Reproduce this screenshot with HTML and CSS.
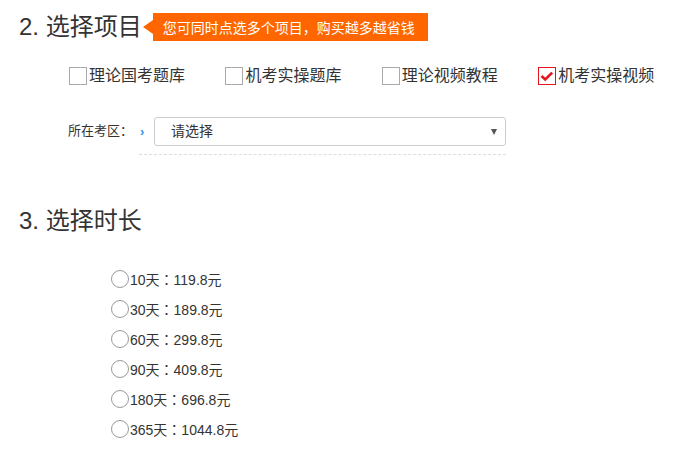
FILE: index.html
```html
<!DOCTYPE html>
<html lang="zh-CN">
<head>
<meta charset="utf-8">
<title>选择项目</title>
<link rel="stylesheet" href="styles.css">
</head>
<body>
<div class="page">
  <section class="step">
    <div class="step-head">
      <h2 class="step-title">2. 选择项目</h2>
      <div class="tip">您可同时点选多个项目<span class="p">，</span>购买越多越省钱</div>
    </div>
    <div class="projects">
      <label class="check"><span class="box"></span>理论国考题库</label>
      <label class="check"><span class="box"></span>机考实操题库</label>
      <label class="check"><span class="box"></span>理论视频教程</label>
      <label class="check checked"><span class="box"><svg viewBox="0 0 18 18" width="18" height="18"><path d="M3.5 9 L7.2 12.4 L14.2 5.6" fill="none" stroke="#e5141b" stroke-width="2.6"/></svg></span>机考实操视频</label>
    </div>
    <div class="area">
      <span class="area-label">所在考区<span class="p">：</span></span>
      <span class="area-arrow">›</span>
      <div class="select"><span>请选择</span><span class="caret"></span></div>
    </div>
    <div class="dash"></div>
  </section>
  <section class="step step3">
    <h2 class="step-title">3. 选择时长</h2>
    <ul class="durations">
      <li><span class="radio"></span>10天<span class="p">：</span>119.8元</li>
      <li><span class="radio"></span>30天<span class="p">：</span>189.8元</li>
      <li><span class="radio"></span>60天<span class="p">：</span>299.8元</li>
      <li><span class="radio"></span>90天<span class="p">：</span>409.8元</li>
      <li><span class="radio"></span>180天<span class="p">：</span>696.8元</li>
      <li><span class="radio"></span>365天<span class="p">：</span>1044.8元</li>
    </ul>
  </section>
</div>
</body>
</html>
```
FILE: styles.css
```css
* { box-sizing: border-box; }
html, body { margin: 0; padding: 0; background: #fff; }
body {
  font-family: "Liberation Sans", "Noto Sans CJK SC", sans-serif;
  color: #333;
}
.p { font-family: "Noto Sans CJK TC", sans-serif; }
.page { padding: 13px 0 0 19px; width: 683px; height: 449px; overflow: hidden; }
.step-head { display: flex; align-items: center; height: 28px; }
.step-title {
  margin: 0;
  font-size: 24px;
  font-weight: normal;
  line-height: 28px;
  color: #333;
}
.tip {
  position: relative;
  margin-left: 11px;
  height: 28px;
  line-height: 28px;
  padding: 0 14px 0 10px;
  background: #ff6600;
  color: #fff;
  font-size: 14px;
  width: 275px;
  white-space: nowrap;
}
.tip::before {
  content: "";
  position: absolute;
  left: -10px;
  top: 7px;
  border-style: solid;
  border-width: 7px 10px 7px 0;
  border-color: transparent #ff6600 transparent transparent;
}
.projects {
  display: flex;
  margin: 26px 0 0 50px;
  height: 18px;
}
.check {
  display: flex;
  align-items: center;
  flex: none;
  width: 156.4px;
  font-size: 16px;
  color: #333;
  line-height: 18px;
  white-space: nowrap;
}
.box {
  width: 18px;
  height: 18px;
  border: 1px solid #aaa;
  margin-right: 2px;
  display: flex;
  align-items: center;
  justify-content: center;
  flex: none;
}
.checked .box { border-color: #e5141b; }
.box svg { display: block; margin: -1px; }
.area {
  display: flex;
  align-items: center;
  margin: 32px 0 0 49px;
  height: 29px;
}
.area-label { font-size: 13px; color: #333; width: 70px; margin-top: -4px; white-space: nowrap; }
.area-arrow { color: #2d8ce6; font-size: 13px; width: 16px; padding-left: 2px; font-weight: bold; }
.select {
  position: relative;
  width: 352px;
  height: 29px;
  border: 1px solid #ccc;
  border-radius: 3px;
  font-size: 14px;
  color: #333;
  line-height: 27px;
  padding-left: 16px;
}
.caret {
  position: absolute;
  right: 8px;
  top: 11px;
  border-style: solid;
  border-width: 6px 3.5px 0 3.5px;
  border-color: #555 transparent transparent transparent;
}
.dash {
  margin: 8px 0 0 120px;
  width: 367px;
  border-top: 1px dashed #ddd;
}
.step3 { margin-top: 52px; }
.durations {
  list-style: none;
  margin: 29px 0 0 92px;
  padding: 0;
}
.durations li {
  display: flex;
  align-items: center;
  height: 30px;
  font-size: 14px;
  color: #333;
}
.radio {
  width: 18px;
  height: 18px;
  border: 1.5px solid #999;
  border-radius: 50%;
  margin-right: 1px;
  flex: none;
}
```
